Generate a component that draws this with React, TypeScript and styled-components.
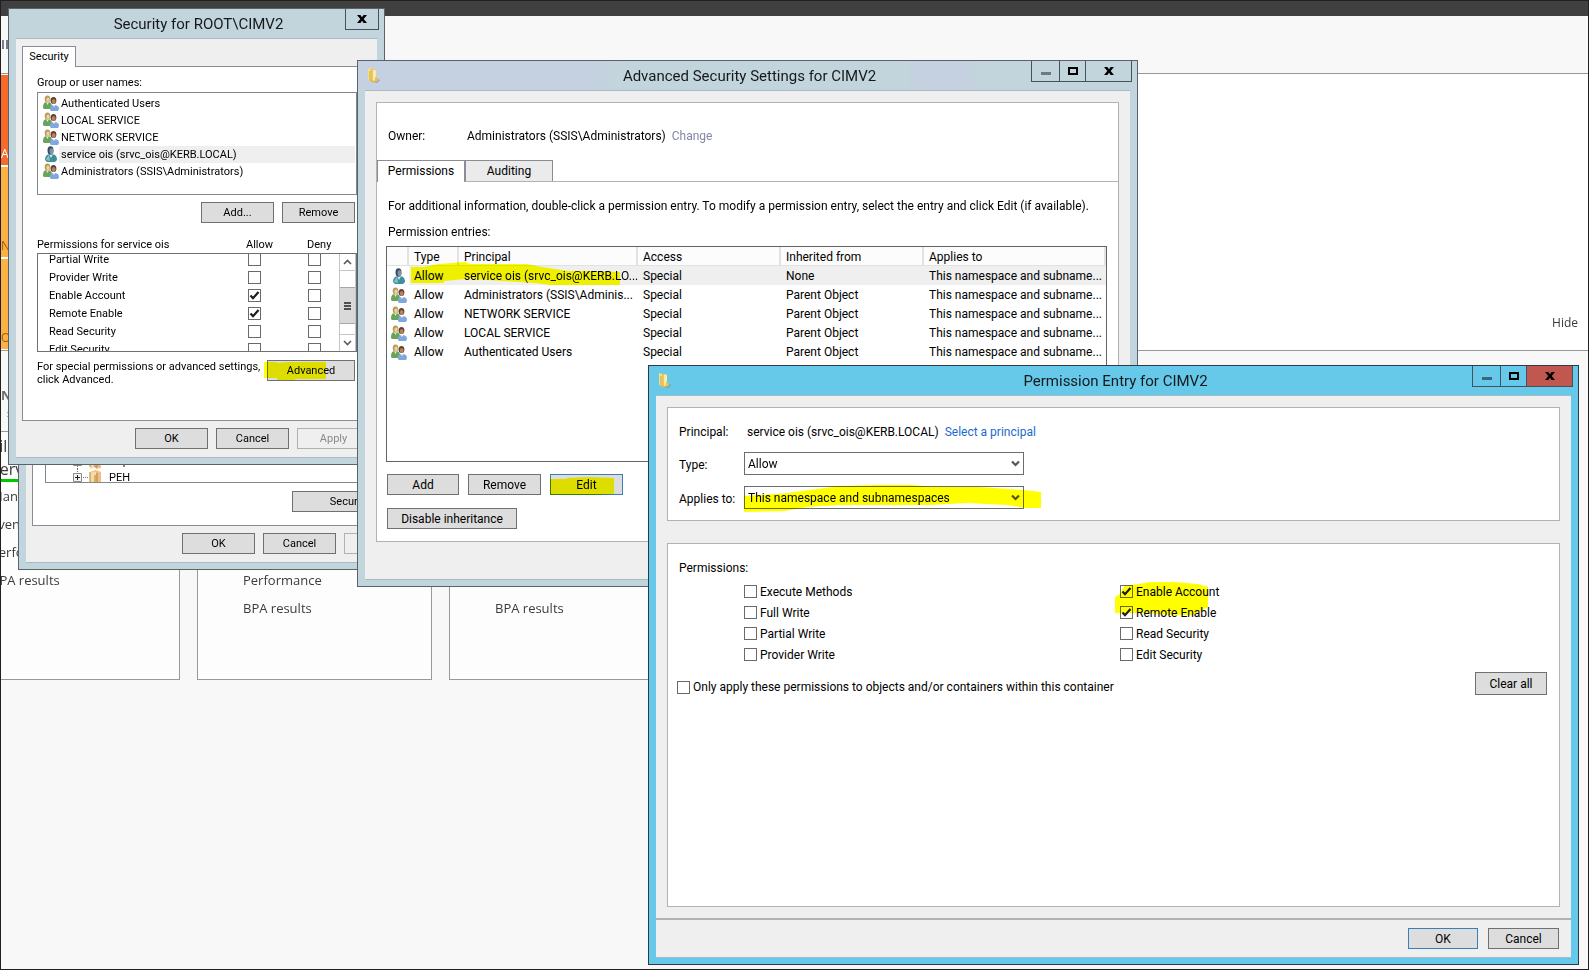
import React from "react";
import styled, { createGlobalStyle, css } from "styled-components";

const GlobalStyle = createGlobalStyle`
  *, *::before, *::after { box-sizing: border-box; }
  body { margin: 0; background: #f8f8f8; }
  button, input, select { font: inherit; color: inherit; margin: 0; }
  p, h1, h2, h3, ul { margin: 0; padding: 0; font: inherit; }
  ul { list-style: none; }
`;

const segoe = css`
  font: 12px/16px Roboto, "Open Sans", sans-serif;
`;
const msSans = css`
  font: 11px/13px Roboto, "Liberation Sans", sans-serif;
`;

/* ---------- server manager behind the dialogs ---------- */

const Desktop = styled.main`
  position: relative;
  display: flex;
  flex-direction: column;
  min-height: 100vh;
  overflow: hidden;
  border: 1px solid #231f20;
  background: #f8f8f8;
  color: #3c3c3c;
  font: 14px/28px "Open Sans", "Noto Sans", sans-serif;
`;
const TopBar = styled.div`
  height: 15px;
  background: #404040;
`;
const WelcomeHeading = styled.h2`
  height: 57px;
  line-height: 58px;
  font-size: 12px;
  font-weight: 700;
  color: #6c7180;
`;
const WelcomeBand = styled.section`
  display: flex;
  justify-content: space-between;
  height: 278px;
  padding: 1px 10px 1px 0;
  border-top: 1px solid #999;
  border-bottom: 1px solid #999;
  background: #fff;
`;
const Tiles = styled.div`
  display: flex;
  flex-direction: column;
  gap: 2px;
  width: 160px;
`;
const Tile = styled.div<{ $active?: boolean }>`
  display: flex;
  align-items: flex-end;
  flex: 1;
  font-size: 12px;
  line-height: 22px;
  background: ${(p) => (p.$active ? "#f76a27" : "#fdb143")};
  color: ${(p) => (p.$active ? "#fff" : "#a85a12")};
`;
const HideButton = styled.button`
  align-self: flex-end;
  padding: 0 0 13px;
  border: 0;
  background: none;
  font-size: 12px;
  line-height: 26px;
`;
const GroupsHeading = styled.header`
  height: 80px;
  padding-top: 35px;
  font-size: 13px;
  line-height: 18px;
`;
const GroupsTitle = styled.h2`
  font-weight: 700;
  color: #6e6a66;
`;
const GroupsCount = styled.p`
  padding-left: 6px;
  font-size: 11px;
`;
const Cards = styled.div`
  display: flex;
  gap: 17px;
  margin-left: -56px;
`;
const Card = styled.section<{ $foot: number }>`
  display: flex;
  flex: 0 0 235px;
  flex-direction: column;
  height: 249px;
  padding-bottom: ${(p) => p.$foot}px;
  border: 1px solid #999;
  background: #fdfdfd;
  ul { margin-top: auto; }
`;
const CardTitle = styled.h3`
  height: 50px;
  padding: 3px 45px 0;
  border-bottom: 3px solid #00c800;
  font-size: 16px;
  line-height: 23px;
`;
const CardItem = styled.li`
  padding-left: 45px;
  font-size: 13px;
`;

/* ---------- window chrome ---------- */

type Tone = "idle" | "active";

const Frame = styled.section<{ $x: number; $y: number; $w: number; $tone: Tone; $classic?: boolean }>`
  position: absolute;
  left: ${(p) => p.$x}px;
  top: ${(p) => p.$y}px;
  width: ${(p) => p.$w}px;
  border: 1px solid ${(p) => (p.$tone === "active" ? "#2f3b44" : "#5a626c")};
  background: ${(p) => (p.$tone === "active" ? "#66c9ea" : "#c2d5dc")};
  color: #000;
  ${(p) => (p.$classic ? msSans : segoe)}
`;
const TitleBar = styled.header<{ $tint?: boolean }>`
  display: grid;
  grid-template-columns: 1fr auto 1fr;
  height: 29px;
  padding: 0 5px 0 9px;
  ${(p) => p.$tint && "background: linear-gradient(90deg, #c5d1e0 0 30%, #c2d5dc 34% 70%, #c5d1e0 72% 78%, #c2d5dc 80%);"}
`;
const TitleText = styled.h1`
  height: 29px;
  font: 15px/31px Roboto, "Open Sans", sans-serif;
  color: #16191c;
  white-space: nowrap;
`;
const TitleIcon = styled.span`
  display: flex;
  align-items: center;
`;
const Captions = styled.div`
  display: flex;
  justify-self: end;
  height: 21px;
`;
const CaptionButton = styled.button<{ $w: number; $danger?: boolean }>`
  display: flex;
  align-items: center;
  justify-content: center;
  width: ${(p) => p.$w}px;
  padding: 0;
  border: 1px solid #45525c;
  border-top: 0;
  background: ${(p) => (p.$danger ? "#c1584f" : "transparent")};
  & + & { border-left: 0; }
`;
const Client = styled.div<{ $pad: string }>`
  margin: 0 7px 6px;
  padding: ${(p) => p.$pad};
  border: solid #a9bbc2;
  border-width: 1px 0;
  background: #efefef;
`;

const CloseGlyph = () => (
  <svg width="10" height="10" viewBox="0 0 10 10" aria-hidden="true">
    <path d="M0 1h3.4L5 3.2 6.600 1H10L6.700 5 10 9H6.600L5 6.800 3.400 9H0l3.300-4z" fill="#000" />
  </svg>
);
const MaxGlyph = () => (
  <svg width="10" height="8" viewBox="0 0 10 8" aria-hidden="true">
    <path d="M1 1h8v6H1z" fill="none" stroke="#000" strokeWidth="2" />
  </svg>
);
const MinGlyph = ({ color }: { color: string }) => (
  <svg width="10" height="8" viewBox="0 0 10 8" aria-hidden="true">
    <path d="M0 5h10v3H0z" fill={color} />
  </svg>
);
const FolderIcon = () => (
  <svg width="14" height="16" viewBox="0 0 14 16" aria-hidden="true">
    <path d="M9 10l4 2-3 3-4-1z" fill="#6d8b98" opacity=".6" />
    <path d="M1 0l4 1v13l-4-2z" fill="#f6dc83" />
    <path d="M5 1h4v12l-4 2z" fill="#e2bd50" />
    <path d="M5 1l4 1v9l-2 2-2-1z" fill="#fbeaa8" />
    <path d="M3 3v10M5 1v13" stroke="#cfa93f" strokeWidth="1" />
    <path d="M8 9l3 1v3l-3 1z" fill="#e6c055" />
  </svg>
);

function WindowControls({ active }: { active?: boolean }) {
  return (
    <Captions>
      <CaptionButton $w={29} aria-label="Minimize"><MinGlyph color={active ? "#39687c" : "#70797e"} /></CaptionButton>
      <CaptionButton $w={26} aria-label="Maximize"><MaxGlyph /></CaptionButton>
      <CaptionButton $w={46} $danger={active} aria-label="Close"><CloseGlyph /></CaptionButton>
    </Captions>
  );
}

/* ---------- controls ---------- */

const Button = styled.button<{ $w: number; $h?: number; $primary?: boolean }>`
  position: relative;
  width: ${(p) => p.$w}px;
  height: ${(p) => p.$h ?? 21}px;
  padding: 0;
  border: 1px solid ${(p) => (p.$primary ? "#3a80b8" : "#707070")};
  background: #ddd;
  white-space: nowrap;
  &:disabled { border-color: #adb2b5; background: #efefef; color: #8a8a8a; }
`;
const ButtonRow = styled.div<{ $gap: number; $pad: string; $end?: boolean }>`
  display: flex;
  gap: ${(p) => p.$gap}px;
  padding: ${(p) => p.$pad};
  justify-content: ${(p) => (p.$end ? "flex-end" : "flex-start")};
`;
const MarkerSvg = styled.svg`
  position: absolute;
  left: 0;
  top: 0;
  overflow: visible;
  pointer-events: none;
  mix-blend-mode: multiply;
`;
const Marker = ({ points, shade = "#ffff00" }: { points: string; shade?: string }) => (
  <MarkerSvg width="1" height="1" aria-hidden="true"><polygon points={points} fill={shade} /></MarkerSvg>
);

const BoxCell = styled.span`
  display: inline-grid;
  width: 13px;
  height: 13px;
  flex: none;
  & > * { grid-area: 1 / 1; }
`;
const BoxInput = styled.input`
  appearance: none;
  width: 13px;
  height: 13px;
  border: 1px solid #6a6a6a;
  background: #fff;
  & + svg { visibility: hidden; pointer-events: none; }
  &:checked + svg { visibility: visible; }
`;
const CheckLabel = styled.label`
  position: relative;
  display: flex;
  align-items: center;
  gap: 3px;
  white-space: nowrap;
`;
function Tick({ checked, label }: { checked?: boolean; label?: string }) {
  return (
    <BoxCell>
      <BoxInput type="checkbox" defaultChecked={checked} aria-label={label} />
      <svg width="13" height="13" viewBox="0 0 13 13" aria-hidden="true">
        <path d="M2.500 6.500L5 9.200 10.500 3" fill="none" stroke="#1c1c1c" strokeWidth="2.200" />
      </svg>
    </BoxCell>
  );
}

const UsersIcon = () => (
  <svg width="16" height="16" viewBox="0 0 16 16" aria-hidden="true">
    <path d="M0 13c0-4 1-6 4-6s5 1 5 5l-2 2H1z" fill="#6ba35a" />
    <path d="M3 7l1.500 3L6 7z" fill="#e8efe2" />
    <ellipse cx="4.500" cy="4" rx="2.800" ry="3.500" fill="#b99a55" />
    <ellipse cx="5" cy="4.800" rx="1.700" ry="2.300" fill="#f0cfa8" />
    <path d="M7 15c0-4 1-5 4-5s5 1 5 4l-1 2H8z" fill="#7fa9dd" />
    <path d="M9.500 10l1.500 2 1.500-2z" fill="#e6eefa" />
    <ellipse cx="10.500" cy="5.500" rx="2.900" ry="3.600" fill="#5b4331" />
    <ellipse cx="10.700" cy="6.500" rx="1.900" ry="2.600" fill="#b9805a" />
  </svg>
);
const UserIcon = () => (
  <svg width="16" height="16" viewBox="0 0 16 16" aria-hidden="true">
    <path d="M2 14c0-4 2-6 6-6s6 2 6 6l-2 2H4z" fill="#3f8f9b" />
    <path d="M6 8l2 4 2-4z" fill="#d6eef0" />
    <ellipse cx="7.500" cy="4.500" rx="3" ry="4.200" fill="#3d4c60" />
    <ellipse cx="8.500" cy="5.300" rx="1.900" ry="3" fill="#7f94a8" />
    <path d="M3 14c1-3 2-4 3-5l1 6z" fill="#83c4cb" />
  </svg>
);

/* ---------- security dialogs (classic font) ---------- */

const Tab = styled.button<{ $w: number; $h?: number; $on?: boolean }>`
  position: relative;
  width: ${(p) => p.$w}px;
  height: ${(p) => p.$h ?? 21}px;
  padding: 0;
  border: 1px solid #8c8c96;
  border-bottom: 0;
  background: ${(p) => (p.$on ? "#fff" : "#ebebeb")};
`;
const TabPage = styled.div<{ $pad: string; $joined?: boolean }>`
  margin-top: ${(p) => (p.$joined ? -1 : 0)}px;
  padding: ${(p) => p.$pad};
  border: 1px solid #8c8c96;
  background: #fff;
`;
const TabHead = styled.div`
  position: relative;
  z-index: 1;
  display: flex;
  ${Tab} { padding-bottom: 2px; }
`;
const UserList = styled.ul`
  height: 103px;
  margin-top: 3px;
  padding-top: 2px;
  border: 1px solid #82878f;
`;
const UserRow = styled.li`
  display: flex;
  height: 17px;
  padding: 0 1px 0 5px;
  line-height: 17px;
`;
const UserName = styled.span<{ $selected?: boolean }>`
  flex: 1;
  padding-left: 2px;
  background: ${(p) => (p.$selected ? "#efefef" : "transparent")};
`;
const RightsHead = styled.div`
  display: grid;
  grid-template-columns: 209px 61px auto;
  margin: 15px 0 2px;
`;
const RightsBox = styled.div`
  display: flex;
  height: 99px;
  overflow: hidden;
  border: 1px solid #6e7278;
`;
const RightsTable = styled.table`
  flex: 1;
  height: 108px;
  margin-top: -4px;
  border-collapse: collapse;
  table-layout: fixed;
  td, th { height: 18px; padding: 0; text-align: left; font-weight: 400; line-height: 13px; }
  th { width: 210px; padding-left: 11px; }
  td { width: 60px; }
  td:last-child { width: 31px; }
  td > span { display: grid; }
`;
const ScrollBar = styled.div`
  display: flex;
  flex-direction: column;
  width: 17px;
  border: solid #c4c4c4;
  border-width: 0 1px;
`;
const ScrollButton = styled.button`
  display: grid;
  place-items: center;
  height: 17px;
  padding: 0;
  border: solid #c4c4c4;
  border-width: 0 0 1px;
  background: #fff;
  &:last-child { margin-top: auto; border-width: 1px 0 0; }
`;
const Thumb = styled.div`
  display: grid;
  place-items: center;
  height: 37px;
  margin-top: 16px;
  border: 1px solid #a8a8a8;
  border-width: 1px 0;
  background: #d9d9d9;
`;
const AdvancedRow = styled.div`
  display: flex;
  justify-content: space-between;
  padding: 8px 2px 34px 0;
`;
const Chevron = ({ up }: { up?: boolean }) => (
  <svg width="9" height="6" viewBox="0 0 9 6" aria-hidden="true">
    <path d={up ? "M1 5l3.500-3.500L8 5" : "M1 1l3.500 3.500L8 1"} fill="none" stroke="#5a5a5a" strokeWidth="1.600" />
  </svg>
);

const TreeBox = styled.div`
  height: 138px;
  overflow: hidden;
  border: 1px solid #82878f;
`;
const Tree = styled.ul`
  margin-top: 107px;
`;
const TreeRow = styled.li`
  display: flex;
  align-items: center;
  gap: 7px;
  height: 16px;
  padding-left: 27px;
`;
const TreeGlyph = () => (
  <svg width="29" height="16" viewBox="0 0 29 16" aria-hidden="true">
    <path d="M4.500 0v4M4.500 13v3M10 8.500h6" stroke="#777" strokeDasharray="1 1" />
    <path d="M.5 4.500h8v8h-8z" fill="#f4f4f4" stroke="#8a8a8a" />
    <path d="M2 8.500h5M4.500 6v5" stroke="#222" />
    <path d="M17 3l6-2v13l-6 2z" fill="#fbd9a0" />
    <path d="M17 3l6-2 5 2v12l-5 1V3z" fill="#f3bd85" />
    <path d="M22 6v8h2V4M17 3v11" fill="none" stroke="#a8863f" />
  </svg>
);

function PropertiesWindow() {
  return (
    <Frame $x={17} $y={298} $w={413} $tone="idle" $classic aria-label="WMI Control properties">
      <TitleBar />
      <Client $pad="7px 6px 8px">
        <TabPage $pad="7px 9px 13px 12px">
          <TreeBox>
            <Tree>
              <TreeRow><TreeGlyph />Nap</TreeRow>
              <TreeRow><TreeGlyph />PEH</TreeRow>
            </Tree>
          </TreeBox>
          <ButtonRow $gap={8} $pad="8px 0 0" $end><Button $w={115}>Security</Button></ButtonRow>
        </TabPage>
        <ButtonRow $gap={8} $pad="7px 0 0" $end>
          <Button $w={73}>OK</Button>
          <Button $w={73}>Cancel</Button>
          <Button $w={73} disabled aria-label="Apply" />
        </ButtonRow>
      </Client>
    </Frame>
  );
}

const users = [
  "Authenticated Users",
  "LOCAL SERVICE",
  "NETWORK SERVICE",
  "service ois (srvc_ois@KERB.LOCAL)",
  "Administrators (SSIS\\Administrators)",
];
const rights: [string, boolean][] = [
  ["Partial Write", false],
  ["Provider Write", false],
  ["Enable Account", true],
  ["Remote Enable", true],
  ["Read Security", false],
  ["Edit Security", false],
];

function SecurityWindow() {
  return (
    <Frame $x={7} $y={7} $w={377} $tone="idle" $classic>
      <TitleBar>
        <span />
        <TitleText>Security for ROOT\CIMV2</TitleText>
        <Captions><CaptionButton $w={34} aria-label="Close"><CloseGlyph /></CaptionButton></Captions>
      </TitleBar>
      <Client $pad="7px 5px 8px 6px">
        <TabHead><Tab $w={54} $on>Security</Tab></TabHead>
        <TabPage $pad="9px 14px 0" $joined>
          <p>Group or user names:</p>
          <UserList>
            {users.map((name, i) => (
              <UserRow key={name}>
                {i === 3 ? <UserIcon /> : <UsersIcon />}
                <UserName $selected={i === 3}>{name}</UserName>
              </UserRow>
            ))}
          </UserList>
          <ButtonRow $gap={8} $pad="7px 2px 0 0" $end>
            <Button $w={73}>Add...</Button>
            <Button $w={73}>Remove</Button>
          </ButtonRow>
          <RightsHead>
            <span>Permissions for service ois</span><span>Allow</span><span>Deny</span>
          </RightsHead>
          <RightsBox>
            <RightsTable>
              <tbody>
                {rights.map(([name, on]) => (
                  <tr key={name}>
                    <th scope="row">{name}</th>
                    <td><Tick checked={on} label={`Allow ${name}`} /></td>
                    <td><Tick label={`Deny ${name}`} /></td>
                  </tr>
                ))}
              </tbody>
            </RightsTable>
            <ScrollBar>
              <ScrollButton aria-label="Scroll up"><Chevron up /></ScrollButton>
              <Thumb>
                <svg width="7" height="8" viewBox="0 0 7 8" aria-hidden="true">
                  <path d="M0 1h7M0 4h7M0 7h7" stroke="#505050" strokeWidth="2" />
                </svg>
              </Thumb>
              <ScrollButton aria-label="Scroll down"><Chevron /></ScrollButton>
            </ScrollBar>
          </RightsBox>
          <AdvancedRow>
            <p>For special permissions or advanced settings,<br />click Advanced.</p>
            <Button $w={88}>
              Advanced
              <Marker points="-4,1 9,1 9,2 20,1 58,1 58,18 27,18 27,19 9,19 9,17 -4,17" />
            </Button>
          </AdvancedRow>
        </TabPage>
        <ButtonRow $gap={8} $pad="7px 2px 0 0" $end>
          <Button $w={73}>OK</Button>
          <Button $w={73}>Cancel</Button>
          <Button $w={73} disabled>Apply</Button>
        </ButtonRow>
      </Client>
    </Frame>
  );
}

/* ---------- advanced security settings ---------- */

const Panel = styled.div<{ $pad: string; $minH?: number }>`
  min-height: ${(p) => p.$minH ?? 0}px;
  padding: ${(p) => p.$pad};
  border: 1px solid #b2b2b2;
  background: #fff;
`;
const OwnerRow = styled.div`
  display: grid;
  grid-template-columns: 79px auto 1fr;
  padding: 25px 11px 16px;
`;
const ChangeLink = styled.a`
  padding-left: 6px;
  color: #8287a5;
  text-decoration: none;
`;
const TabStrip = styled.div`
  display: flex;
  height: 22px;
  border-bottom: 1px solid #b2b2b2;
  ${Tab} { height: 21px; }
  ${Tab}:first-child { height: 22px; padding-bottom: 1px; }
`;
const AclBody = styled.div`
  padding: 16px 11px 12px 9px;
`;
const AclText = styled.p`
  padding: 0 0 10px 2px;
  white-space: nowrap;
  & + & { padding-bottom: 6px; }
`;
const AclBox = styled.div`
  height: 216px;
  border: 1px solid #646464;
`;
const AclTable = styled.table`
  width: 100%;
  table-layout: fixed;
  border-collapse: separate;
  border-spacing: 0;
  th, td { position: relative; height: 19px; padding: 0 0 0 5px; text-align: left; font-weight: 400; line-height: 16px; white-space: nowrap; }
  th { padding-top: 2px; background: #fcfcfc; border: solid #e2e2e2; border-width: 0 2px 1px 0; }
  td:first-child { padding-left: 4px; }
  svg { display: block; }
  ${MarkerSvg} { left: 0; top: 0; }
`;
const AclRow = styled.tr<{ $selected?: boolean }>`
  td + td { background: ${(p) => (p.$selected ? "#efefef" : "#fff")}; }
`;
const entries = [
  ["service ois (srvc_ois@KERB.LO...", "None"],
  ["Administrators (SSIS\\Adminis...", "Parent Object"],
  ["NETWORK SERVICE", "Parent Object"],
  ["LOCAL SERVICE", "Parent Object"],
  ["Authenticated Users", "Parent Object"],
];

function AdvancedWindow() {
  return (
    <Frame $x={356} $y={59} $w={781} $tone="idle">
      <TitleBar $tint>
        <TitleIcon><FolderIcon /></TitleIcon>
        <TitleText>Advanced Security Settings for CIMV2</TitleText>
        <WindowControls />
      </TitleBar>
      <Client $pad="11px 11px 37px">
        <Panel $pad="0">
          <OwnerRow>
            <span>Owner:</span>
            <span>Administrators (SSIS\Administrators)</span>
            <ChangeLink href="#owner">Change</ChangeLink>
          </OwnerRow>
          <TabStrip>
            <Tab $w={88} $on>Permissions</Tab>
            <Tab $w={88}>Auditing</Tab>
          </TabStrip>
          <AclBody>
            <AclText>For additional information, double-click a permission entry. To modify a permission entry, select the entry and click Edit (if available).</AclText>
            <AclText>Permission entries:</AclText>
            <AclBox>
              <AclTable>
                <colgroup>
                  <col width="22" /><col width="50" /><col width="179" /><col width="143" /><col width="143" /><col />
                </colgroup>
                <thead>
                  <tr><th aria-label="Kind" /><th>Type</th><th>Principal</th><th>Access</th><th>Inherited from</th><th>Applies to</th></tr>
                </thead>
                <tbody>
                  {entries.map(([principal, from], i) => (
                    <AclRow key={principal} $selected={i === 0}>
                      <td>{i === 0 ? <UserIcon /> : <UsersIcon />}</td>
                      <td>Allow</td>
                      <td>
                        {principal}
                        {i === 0 && (
                          <Marker points="-48,1 -36,1 -21,-2 6,-4 11,-2 68,-2 83,1 109,5 129,5 161,6 161,21 109,21 76,17 29,14 6,13 -15,15 -15,17 -48,17" />
                        )}
                      </td>
                      <td>Special</td>
                      <td>{from}</td>
                      <td>This namespace and subname...</td>
                    </AclRow>
                  ))}
                </tbody>
              </AclTable>
            </AclBox>
            <ButtonRow $gap={9} $pad="12px 0 13px 1px">
              <Button $w={72}>Add</Button>
              <Button $w={73}>Remove</Button>
              <Button $w={73} $primary>
                Edit
                <Marker points="-1,4 16,4 16,3 39,2 63,3 63,19 45,20 -1,20" />
              </Button>
            </ButtonRow>
            <ButtonRow $gap={9} $pad="0 0 0 1px"><Button $w={130}>Disable inheritance</Button></ButtonRow>
          </AclBody>
        </Panel>
      </Client>
    </Frame>
  );
}

/* ---------- permission entry ---------- */

const EntryBody = styled.div`
  display: flex;
  flex-direction: column;
  gap: 22px;
  padding: 11px;
`;
const Field = styled.div<{ $h: number }>`
  display: grid;
  grid-template-columns: 65px auto 1fr;
  align-items: center;
  height: ${(p) => p.$h}px;
  & + & { margin-top: 11px; }
  label { padding-top: 2px; }
`;
const PrincipalName = styled.span`
  padding: 0 6px 0 3px;
`;
const PrincipalLink = styled.a`
  color: #1b6acb;
  text-decoration: none;
`;
const SelectBox = styled.div`
  position: relative;
  display: grid;
  width: 280px;
  height: 23px;
  & > * { grid-area: 1 / 1; }
  & > svg:not(${MarkerSvg}) { align-self: center; justify-self: end; margin-right: 4px; pointer-events: none; }
`;
const Select = styled.select`
  appearance: none;
  width: 100%;
  height: 23px;
  padding: 0 20px 0 3px;
  border: 1px solid #6c6c6c;
  border-radius: 0;
  background: #fff;
  line-height: 16px;
`;
const RightsGrid = styled.div`
  display: grid;
  grid-template-columns: 376px 1fr;
  grid-template-rows: repeat(4, 21px);
  grid-auto-flow: column;
  justify-items: start;
  padding: 5px 0 0 65px;
`;
const ScopeRow = styled.div`
  display: flex;
  align-items: flex-end;
  justify-content: space-between;
  margin-top: 7px;
  ${CheckLabel} { margin-left: -2px; }
`;
const EntryFooter = styled.footer`
  display: flex;
  justify-content: flex-end;
  gap: 10px;
  padding: 8px 12px;
  border-top: 2px solid #b2b2b2;
`;
const DropArrow = () => (
  <svg width="9" height="7" viewBox="0 0 9 7" aria-hidden="true">
    <path d="M1 1.500l3.500 3.500L8 1.500" fill="none" stroke="#555" strokeWidth="2.200" />
  </svg>
);

function EntryWindow() {
  return (
    <Frame $x={647} $y={364} $w={931} $tone="active">
      <TitleBar>
        <TitleIcon><FolderIcon /></TitleIcon>
        <TitleText>Permission Entry for CIMV2</TitleText>
        <WindowControls active />
      </TitleBar>
      <Client $pad="0">
        <EntryBody>
          <Panel $pad="15px 11px 11px">
            <Field $h={18}>
              <span>Principal:</span>
              <PrincipalName>service ois (srvc_ois@KERB.LOCAL)</PrincipalName>
              <PrincipalLink href="#principal">Select a principal</PrincipalLink>
            </Field>
            <Field $h={23}>
              <label htmlFor="type">Type:</label>
              <SelectBox>
                <Select id="type" defaultValue="Allow"><option>Allow</option><option>Deny</option></Select>
                <DropArrow />
              </SelectBox>
            </Field>
            <Field $h={23}>
              <label htmlFor="scope">Applies to:</label>
              <SelectBox>
                <Select id="scope"><option>This namespace and subnamespaces</option></Select>
                <DropArrow />
                <Marker points="0,10 16,9 43,7 73,3 96,0 133,-1 169,-1 186,1 236,1 279,4 297,6 297,22 283,22 263,19 223,17 186,19 96,19 63,21 41,25 0,26" />
              </SelectBox>
            </Field>
          </Panel>
          <Panel $pad="16px 12px 11px 11px" $minH={364}>
            <p>Permissions:</p>
            <RightsGrid>
              <CheckLabel><Tick />Execute Methods</CheckLabel>
              <CheckLabel><Tick />Full Write</CheckLabel>
              <CheckLabel><Tick />Partial Write</CheckLabel>
              <CheckLabel><Tick />Provider Write</CheckLabel>
              <CheckLabel><Tick checked />Enable Account</CheckLabel>
              <CheckLabel>
                <Tick checked />Remote Enable
                <Marker points="-5,-5 0,-8 4,-16 25,-19 29,-20 55,-20 78,-18 88,-15 88,5 73,13 50,13 29,11 -5,11" />
              </CheckLabel>
              <CheckLabel><Tick />Read Security</CheckLabel>
              <CheckLabel><Tick />Edit Security</CheckLabel>
            </RightsGrid>
            <ScopeRow>
              <CheckLabel><Tick />Only apply these permissions to objects and/or containers within this container</CheckLabel>
              <Button $w={72} $h={23}>Clear all</Button>
            </ScopeRow>
          </Panel>
        </EntryBody>
        <EntryFooter>
          <Button $w={70} $primary>OK</Button>
          <Button $w={71}>Cancel</Button>
        </EntryFooter>
      </Client>
    </Frame>
  );
}

const cards = [
  { title: ["File", "Services"], foot: 85, items: ["Manageability", "Events", "Performance", "BPA results"] },
  { foot: 57, items: ["Performance", "BPA results"] },
  { foot: 57, items: ["BPA results"] },
];

export default function App() {
  return (
    <>
      <GlobalStyle />
      <Desktop>
        <TopBar />
        <WelcomeHeading>IE</WelcomeHeading>
        <WelcomeBand>
          <Tiles>
            <Tile $active>A</Tile>
            <Tile>NE</Tile>
            <Tile>O</Tile>
          </Tiles>
          <HideButton>Hide</HideButton>
        </WelcomeBand>
        <GroupsHeading>
          <GroupsTitle>N</GroupsTitle>
          <GroupsCount>s</GroupsCount>
        </GroupsHeading>
        <Cards>
          {cards.map((card, i) => (
            <Card key={i} $foot={card.foot}>
              {card.title && <CardTitle>{card.title[0]}<br />{card.title[1]}</CardTitle>}
              <ul>{card.items.map((item) => <CardItem key={item}>{item}</CardItem>)}</ul>
            </Card>
          ))}
        </Cards>
        <PropertiesWindow />
        <SecurityWindow />
        <AdvancedWindow />
        <EntryWindow />
      </Desktop>
    </>
  );
}
